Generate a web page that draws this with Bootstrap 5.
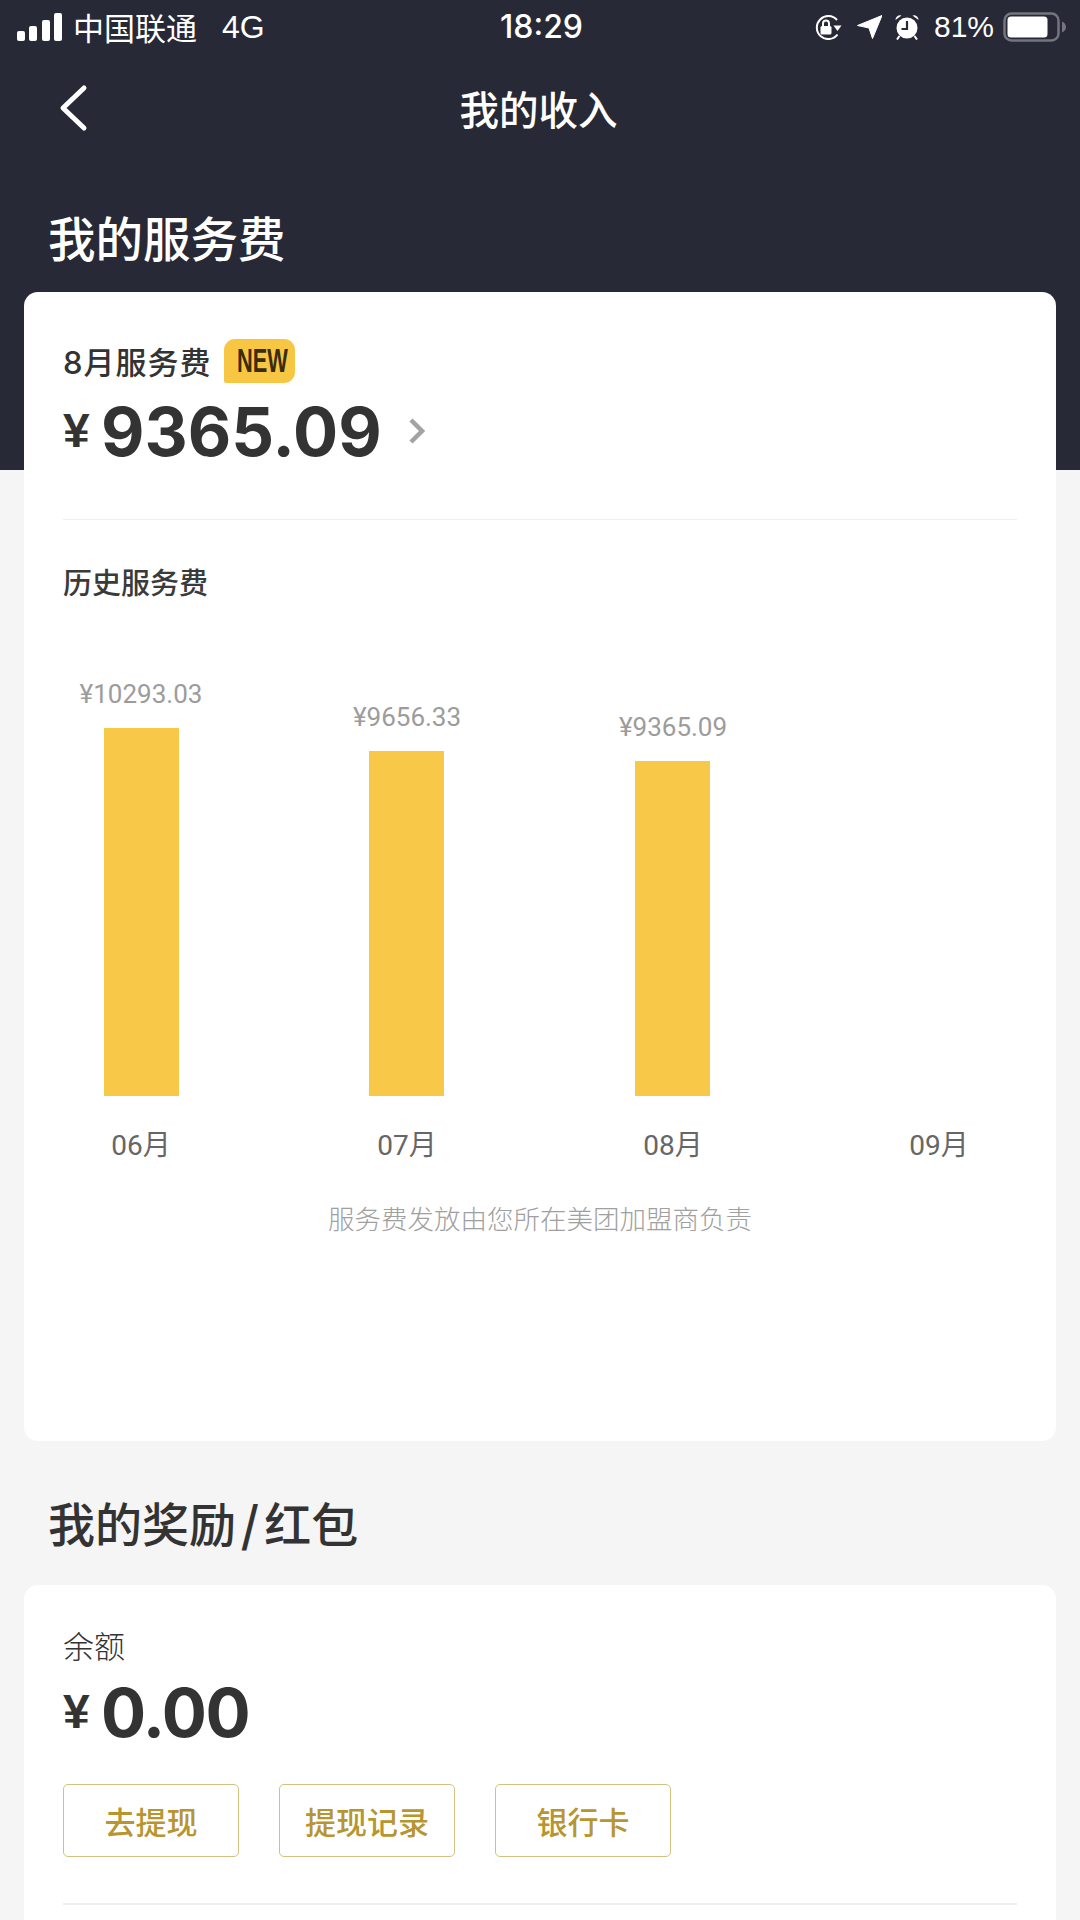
<!doctype html>
<html lang="zh-CN">
<head>
<meta charset="utf-8">
<title>我的收入</title>
<link rel="stylesheet" href="https://cdn.jsdelivr.net/npm/bootstrap@5.3.0/dist/css/bootstrap.min.css">
<style>
html,body{margin:0;background:#f5f5f5}
.screen{width:1080px;height:1920px;overflow:hidden;background:#f5f5f5;font-family:"Noto Sans CJK SC","Noto Sans",sans-serif;color:#333}
.hero{height:470px;background:#272936;color:#fff}
.statusbar{height:54px;padding:0 14px 0 17px;font-size:31px;line-height:54px}
.status-side{flex:1 1 0}
.carrier{margin-left:11px}
.net{margin-left:25px;font-family:"Liberation Sans",sans-serif;font-size:32px}
.clock{font-family:Inter,"Liberation Sans",sans-serif;font-size:32px;font-weight:500}
.ic-lock{margin-right:15px}
.ic-loc{margin-right:12px}
.pct{font-family:"Liberation Sans",sans-serif;font-size:30px;margin:0 9px 0 14px}
.topnav{height:108px;position:relative;padding-right:3px}
.back{position:absolute;left:57px;top:30px}
.navtitle{font-size:39.5px;font-weight:500;line-height:1}
.herotitle{margin:41px 0 0 48px;font-size:47.5px;font-weight:500;line-height:68px}
.sheet{background:#fff;border-radius:14px;margin:0 24px;padding:0 39px}
.sheet-one{margin-top:-178px;height:1149px;position:relative}
.month-line{padding-top:47px;height:103px}
.month-label{font-family:Inter,"Noto Sans CJK SC",sans-serif;font-size:31px;font-weight:500;line-height:48px;letter-spacing:1px}
.tag-new{margin:0 0 0 12px;width:71px;height:44px;background:#f7c744;border-radius:11px 11px 11px 2px;color:#3a2c0c;font-family:"Liberation Sans",sans-serif;font-weight:700;font-size:33px;line-height:44px;text-align:center}
.tag-text{display:inline-block;transform:scaleX(.66)}
.yen{font-family:"Liberation Sans",sans-serif;font-weight:700;font-size:48px;line-height:1;width:38px}
.sum{font-family:Inter,"Liberation Sans",sans-serif;font-weight:700;font-size:67px;line-height:1}
.sum-tight{letter-spacing:-1.400px}
.more{margin-left:26px}
.sum-line{height:72px}
.rule{height:1px;background:#f0f0f0;margin-top:52px}
.hist{font-size:29px;font-weight:500;line-height:40px;margin-top:41px;color:#3a3a3a}
.chart{height:493px;margin-top:72px}
.bar-col{width:156px}
.bar-val{font-family:Roboto,sans-serif;font-size:26px;line-height:30px;color:#9c9c9c;margin-bottom:19px;white-space:nowrap}
.bar-fill{width:75px;background:#f8c948}
.bar-mon{font-family:Roboto,"Noto Sans CJK SC",sans-serif;font-size:28px;line-height:40px;color:#666;margin-top:30px}
.plot{height:444px}
.foot{font-size:26.5px;font-weight:300;line-height:40px;color:#a0a0a0;text-align:center;margin-top:32px}
.sect{margin:46px 0 0 48px;font-size:47px;font-weight:500;line-height:70px;color:#333}
.slash{font-weight:700;margin:0 5px}
.sheet-two{margin-top:28px;height:360px;padding-top:42px}
.bal{font-size:31px;line-height:36px;font-weight:300}
.bal-line{margin-top:19px;height:60px}
.acts{margin-top:42px;gap:40px}
.btn.act{width:176px;height:73px;padding:0;border:1px solid #d3c182;border-radius:5px;background:#fff;color:#b79530;font-size:31px;font-weight:500;line-height:71px}
.rule-two{height:2px;background:#efefef;margin-top:46px}
</style>
</head>
<body>
<div class="screen">
  <section class="hero">
    <div class="statusbar d-flex align-items-center">
      <div class="status-side d-flex align-items-center">
        <svg width="45" height="28" viewBox="0 0 45 28" fill="#fff"><rect x="0" y="18" width="8" height="10" rx="2"/><rect x="12" y="13" width="8" height="15" rx="2"/><rect x="25" y="7" width="8" height="21" rx="2"/><rect x="37" y="0" width="8" height="28" rx="2"/></svg>
        <span class="carrier">中国联通</span><span class="net">4G</span>
      </div>
      <div class="clock">18:29</div>
      <div class="status-side d-flex align-items-center justify-content-end">
        <svg class="ic-lock" width="28" height="25" viewBox="0 0 28 25" fill="none"><path d="M23 5A11.500 11.500 0 1 0 23.500 19.500" stroke="#fff" stroke-width="2"/><path d="M19.500 10.500h8l-4 5.500z" fill="#fff"/><rect x="6.500" y="11" width="11" height="8.500" rx="1.500" fill="#fff"/><path d="M9 11V8.500a3 3 0 0 1 6 0V11" stroke="#fff" stroke-width="2"/></svg>
        <svg class="ic-loc" width="25" height="24" viewBox="0 0 25 24"><path d="M25 .5L15.500 23.500 12 13 .5 10.500z" fill="#fff" stroke="#fff" stroke-linejoin="round"/></svg>
        <svg width="26" height="26" viewBox="0 0 26 26"><circle cx="13" cy="14" r="10.500" fill="#fff"/><path d="M1.500 6a4.500 4.500 0 0 1 6-4.500zM24.500 6a4.500 4.500 0 0 0-6-4.500z" fill="#fff"/><path d="M13 7v8H7.500" stroke="#272936" stroke-width="2.200" fill="none"/><path d="M5.500 22l-2.500 3.500M20.500 22l2.500 3.500" stroke="#fff" stroke-width="2"/></svg>
        <span class="pct">81%</span>
        <svg width="63" height="30" viewBox="0 0 63 30"><rect x="1.500" y="1.500" width="54" height="27" rx="7" fill="none" stroke="#74757e" stroke-width="2.500"/><rect x="4.500" y="4.500" width="40" height="21" rx="3.500" fill="#fff"/><path d="M59 9.500c2.500 1 4 3 4 5.500s-1.500 4.500-4 5.500z" fill="#74757e"/></svg>
      </div>
    </div>
    <div class="topnav d-flex align-items-center justify-content-center">
      <svg class="back" width="32" height="48" viewBox="0 0 32 48" fill="none"><path d="M27 4L6 24l21 20" stroke="#fff" stroke-width="5" stroke-linecap="round" stroke-linejoin="round"/></svg>
      <div class="navtitle">我的收入</div>
    </div>
    <h1 class="herotitle">我的服务费</h1>
  </section>

  <section class="sheet sheet-one">
    <div class="month-line d-flex align-items-start">
      <span class="month-label">8月服务费</span><span class="tag-new"><span class="tag-text">NEW</span></span>
    </div>
    <div class="sum-line d-flex align-items-center">
      <span class="yen">¥</span><span class="sum">9365.09</span>
      <svg class="more" width="17" height="26" viewBox="0 0 17 26" fill="none"><path d="M3 2l11 11L3 24" stroke="#a3a3a3" stroke-width="4.500"/></svg>
    </div>
    <div class="rule"></div>
    <div class="hist">历史服务费</div>
    <div class="chart d-flex justify-content-between">
      <div class="bar-col d-flex flex-column align-items-center">
        <div class="plot d-flex flex-column justify-content-end align-items-center"><div class="bar-val">¥10293.03</div><div class="bar-fill" style="height:368px"></div></div>
        <div class="bar-mon">06月</div>
      </div>
      <div class="bar-col d-flex flex-column align-items-center">
        <div class="plot d-flex flex-column justify-content-end align-items-center"><div class="bar-val">¥9656.33</div><div class="bar-fill" style="height:345px"></div></div>
        <div class="bar-mon">07月</div>
      </div>
      <div class="bar-col d-flex flex-column align-items-center">
        <div class="plot d-flex flex-column justify-content-end align-items-center"><div class="bar-val">¥9365.09</div><div class="bar-fill" style="height:335px"></div></div>
        <div class="bar-mon">08月</div>
      </div>
      <div class="bar-col d-flex flex-column align-items-center">
        <div class="plot"></div>
        <div class="bar-mon">09月</div>
      </div>
    </div>
    <div class="foot">服务费发放由您所在美团加盟商负责</div>
  </section>

  <h2 class="sect">我的奖励<span class="slash">/</span>红包</h2>
  <section class="sheet sheet-two">
    <div class="bal">余额</div>
    <div class="bal-line d-flex align-items-center"><span class="yen">¥</span><span class="sum sum-tight">0.00</span></div>
    <div class="acts d-flex">
      <button type="button" class="btn act">去提现</button>
      <button type="button" class="btn act">提现记录</button>
      <button type="button" class="btn act">银行卡</button>
    </div>
    <div class="rule-two"></div>
  </section>
</div>
<script src="https://cdn.jsdelivr.net/npm/bootstrap@5.3.0/dist/js/bootstrap.bundle.min.js"></script>
</body>
</html>
